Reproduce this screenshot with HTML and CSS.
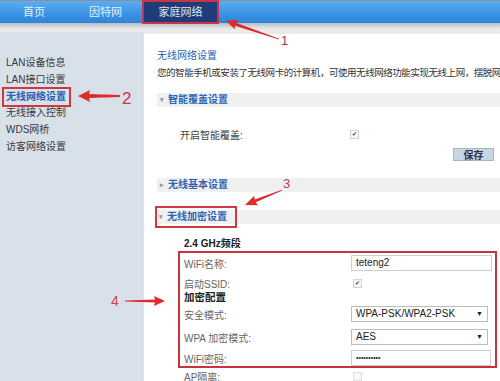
FILE: index.html
```html
<!DOCTYPE html>
<html lang="zh-CN">
<head>
    <meta charset="UTF-8">
    <title>家庭网络 - 无线网络设置</title>
    <link rel="stylesheet" href="styles.css">
</head>
<body>
    <div class="nav">
        <a class="tab">首页</a>
        <a class="tab">因特网</a>
        <a class="tab active">家庭网络</a>
    </div>
    <div class="subbar"></div>

    <div class="main">
        <ul class="side">
            <li>LAN设备信息</li>
            <li>LAN接口设置</li>
            <li class="current">无线网络设置</li>
            <li>无线接入控制</li>
            <li>WDS网桥</li>
            <li>访客网络设置</li>
        </ul>

        <div class="content">
            <h1>无线网络设置</h1>
            <p class="desc">您的智能手机或安装了无线网卡的计算机，可使用无线网络功能实现无线上网，摆脱网</p>

            <div class="bar"><span class="caret">&#9662;</span>智能覆盖设置</div>
            <div class="row smart">
                <span class="label">开启智能覆盖:</span>
                <span class="check on"></span>
            </div>
            <div class="actions"><button class="save">保存</button></div>

            <div class="bar basic"><span class="caret">&#9656;</span>无线基本设置</div>
            <div class="bar secure"><span class="mark"><span class="caret">&#9662;</span>无线加密设置</span></div>

            <div class="band">
                <h2>2.4 GHz频段</h2>
                <div class="group">
                    <div class="row r-name">
                        <span class="label">WiFi名称:</span>
                        <span class="field">teteng2</span>
                    </div>
                    <div class="row r-ssid">
                        <span class="label">启动SSID:</span>
                        <span class="check on"></span>
                    </div>
                    <h3>加密配置</h3>
                    <div class="row r-mode">
                        <span class="label">安全模式:</span>
                        <span class="field select">WPA-PSK/WPA2-PSK</span>
                    </div>
                    <div class="row r-wpa">
                        <span class="label">WPA 加密模式:</span>
                        <span class="field select">AES</span>
                    </div>
                    <div class="row r-pass">
                        <span class="label">WiFi密码:</span>
                        <span class="field pass">&bull;&bull;&bull;&bull;&bull;&bull;&bull;&bull;&bull;&bull;</span>
                    </div>
                </div>
                <div class="row r-ap">
                    <span class="label">AP隔离:</span>
                    <span class="check"></span>
                </div>
            </div>
        </div>
    </div>

    <svg class="notes" width="500" height="381" viewBox="0 0 500 381">
        <g fill="#e12a2a">
            <polygon transform="translate(226 21) rotate(18.8)" points="0,0 11,-5 10,-1.6 56,-0.4 56,0.4 10,1.6 11,5"/>
            <polygon transform="translate(78 96)" points="0,0 12,-6 11,-2 42,-1 42,1 11,2 12,6"/>
            <polygon transform="translate(245 205) rotate(-22)" points="0,0 12,-5 11,-1.6 40,-0.4 40,0.4 11,1.6 12,5"/>
            <polygon transform="translate(165 301) rotate(180)" points="0,0 11,-5 10,-1.6 40,-0.6 40,0.6 10,1.6 11,5"/>
        </g>
        <g class="num">
            <text x="281" y="45" font-size="13" fill="#a8344a">1</text>
            <text x="122" y="104" font-size="17" fill="#d0353a">2</text>
            <text x="283" y="188" font-size="13" fill="#b8404c">3</text>
            <text x="111" y="306" font-size="14" fill="#d2423f">4</text>
        </g>
    </svg>
</body>
</html>
```

FILE: styles.css
```css
body {
    margin: 0;
    width: 500px;
    height: 381px;
    overflow: hidden;
    position: relative;
    font-family: "Liberation Sans", "Noto Sans CJK SC", sans-serif;
    font-size: 10px;
    color: #333;
    background: #fff;
}
.nav {
    display: flex;
    height: 22px;
    border-top: 1px solid #8c9096;
    background: linear-gradient(#5aaef0, #3a92e4 60%, #2f84d6);
}
.tab {
    width: 75px;
    line-height: 22px;
    text-align: center;
    font-size: 11px;
    color: #e4eefa;
}
.tab:first-child {
    width: 68px;
}
.tab.active {
    background: #1f3c78;
    color: #dfe6f2;
    outline: 2px solid #c8334a;
    outline-offset: -1px;
}
.subbar {
    height: 9px;
    background: linear-gradient(#b7bcc2, #e6e7e9 60%, #eeeeee);
}
.main {
    display: flex;
    height: 360px;
}
.side {
    width: 143px;
    margin: 0;
    padding: 23px 0 0 6px;
    box-sizing: border-box;
    list-style: none;
    background: #d8e0ea;
}
.side li {
    height: 16.8px;
    line-height: 16px;
    color: #3a3a3a;
}
.side .current {
    display: table;
    color: #2a5fb4;
    font-weight: bold;
    outline: 2px solid #d0383c;
    margin-left: -2px;
    padding: 0 3px 0 2px;
}
.content {
    flex: 1;
    min-width: 0;
    padding: 2px 0 0 13px;
    border-top: 2px solid #e9e9e9;
    border-left: 1px solid #e2e2e2;
}
h1 {
    margin: 13px 0 0;
    font-size: 10px;
    line-height: 14px;
    font-weight: normal;
    color: #2a62b0;
}
.desc {
    margin: 3px 0 0;
    line-height: 14px;
    font-size: 9.5px;
    letter-spacing: -0.45px;
    white-space: nowrap;
}
.bar {
    height: 14px;
    line-height: 14px;
    margin-top: 13px;
    padding-left: 3px;
    background: #f0f0f0;
    color: #2f66b3;
    font-weight: bold;
}
.caret {
    display: inline-block;
    width: 8px;
    font-size: 7px;
    color: #999;
    vertical-align: top;
}
.bar.basic {
    margin-top: 17px;
}
.bar.secure {
    margin-top: 18px;
}
.mark {
    display: inline-block;
    height: 14px;
    outline: 2px solid #cf3a3e;
    outline-offset: 2px;
    padding-right: 6px;
    margin-left: -1px;
}
.row {
    display: flex;
    align-items: center;
}
.label {
    color: #666;
}
.smart {
    height: 16px;
    margin-top: 19px;
    padding-left: 23px;
}
.smart .label {
    width: 170px;
    color: #444;
}
.check {
    width: 7px;
    height: 7px;
    border: 1px solid #d4d4d4;
    background: #f7f7f7;
    position: relative;
}
.check.on::after {
    content: "\2714";
    position: absolute;
    left: 1px;
    top: -1px;
    font-size: 6px;
    line-height: 9px;
    color: #444;
}
.actions {
    display: flex;
    justify-content: flex-end;
    padding-right: 6px;
}
.save {
    width: 41px;
    height: 13px;
    padding: 0;
    margin-top: 6px;
    border: 1px solid #a9b6c4;
    background: #c7d5e4;
    font-family: "Noto Sans CJK SC", sans-serif;
    font-size: 10px;
    font-weight: bold;
    line-height: 11px;
    color: #334;
}
.band {
    padding-left: 21px;
}
h2 {
    margin: 13px 0 0 6px;
    font-size: 10px;
    line-height: 14px;
    color: #222;
}
.group {
    width: 311px;
    height: 113px;
    border: 2px solid #c8343c;
    padding: 0 0 0 4px;
}
.group .label {
    width: 167px;
}
.field {
    width: 135px;
    height: 14px;
    padding-left: 4px;
    border: 1px solid #cfcfcf;
    line-height: 14px;
    color: #222;
    box-sizing: content-box;
}
.select {
    position: relative;
    width: 131px;
    border-color: #bdbdbd;
}
.select::after {
    content: "\25BC";
    position: absolute;
    right: 4px;
    top: 0;
    font-size: 7px;
    color: #222;
}
.pass {
    font-size: 7px;
}
.r-name {
    height: 18px;
    margin-top: 1px;
}
.r-ssid {
    height: 15px;
    margin-top: 4px;
}
.r-ssid .check {
    margin-left: 2px;
}
h3 {
    margin: 0;
    height: 13px;
    font-size: 10.5px;
    line-height: 13px;
    color: #222;
}
.r-mode {
    height: 16px;
    margin-top: 2px;
}
.r-wpa {
    height: 16px;
    margin-top: 7px;
}
.r-pass {
    height: 16px;
    margin-top: 5px;
}
.r-pass .field {
    width: 134px;
}
.r-ap {
    height: 14px;
    margin-top: 1px;
    padding-left: 6px;
}
.r-ap .label {
    width: 167px;
}
.r-ap .check {
    margin-left: 2px;
    border-color: #e0e0e0;
}
.notes {
    position: absolute;
    left: 0;
    top: 0;
    pointer-events: none;
}
.num text {
    font-family: "Liberation Sans", sans-serif;
}
```
